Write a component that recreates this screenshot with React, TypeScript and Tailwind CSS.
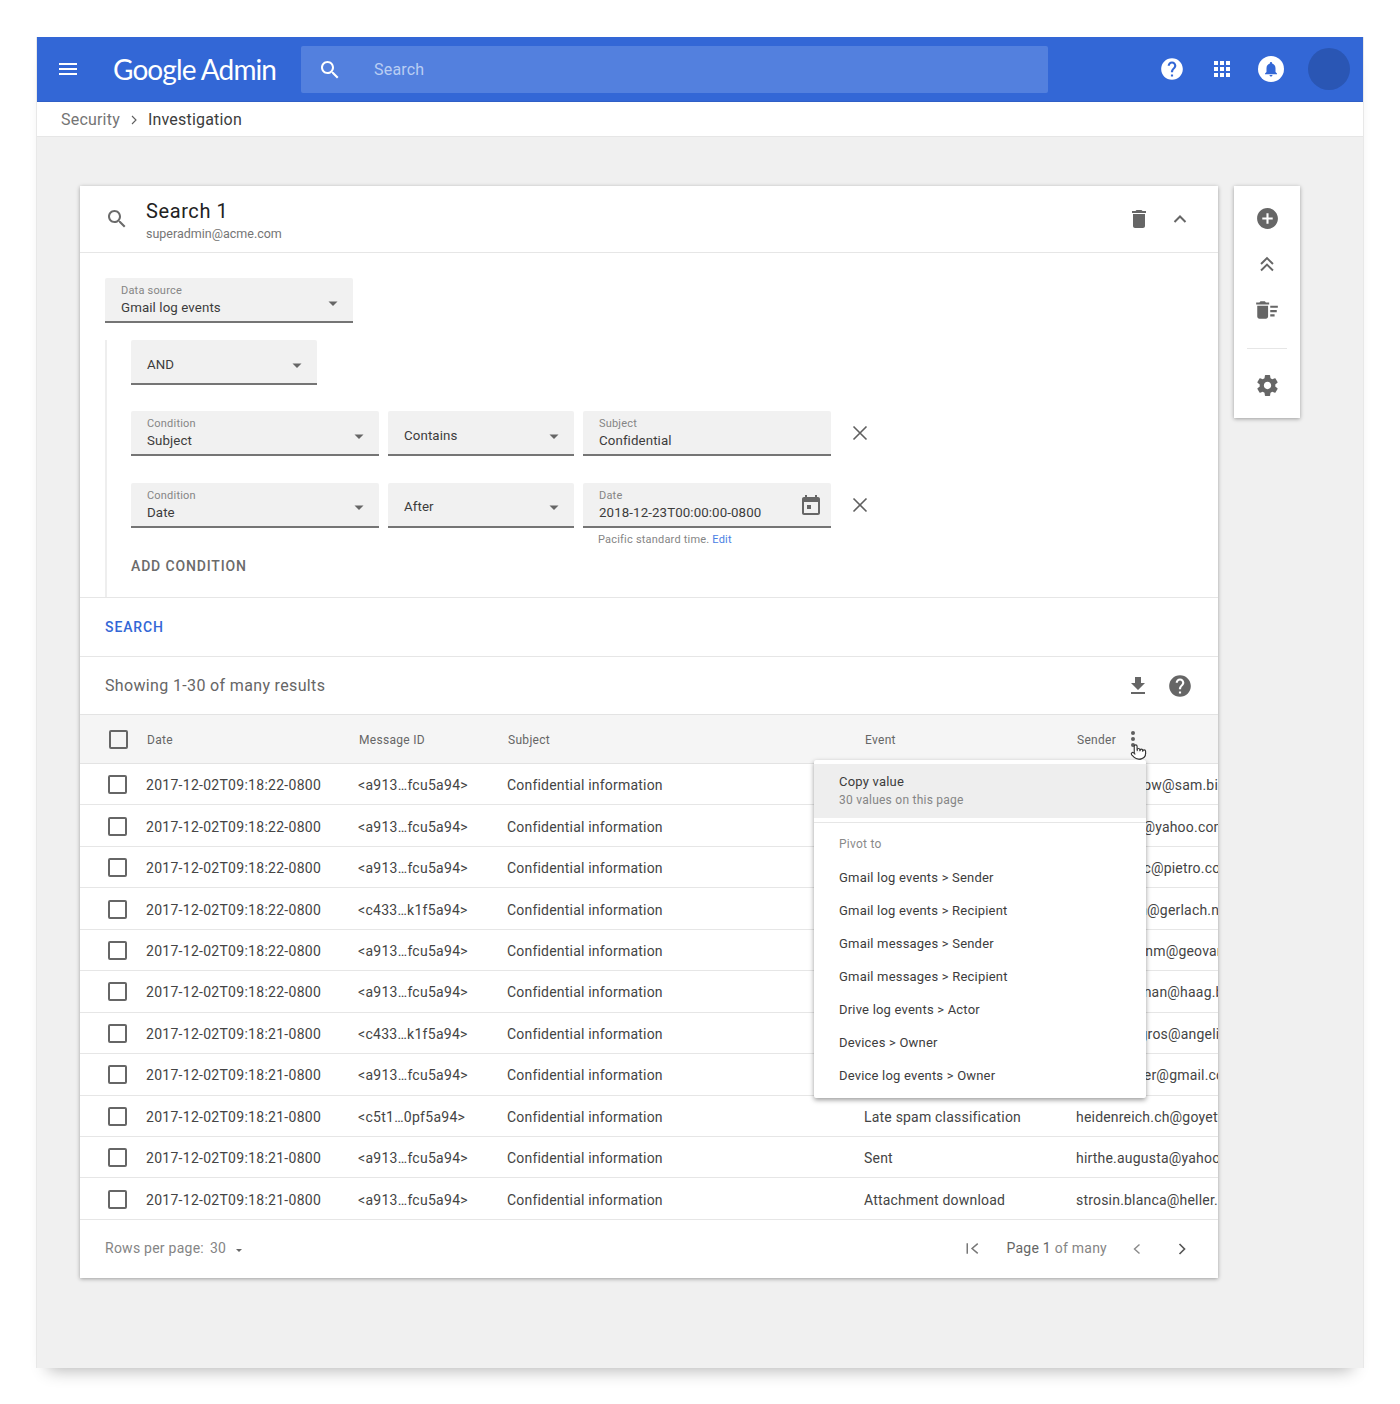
import type { ReactNode } from "react";
import { Pointer } from "lucide-react";

const paths = {
  menu: "M3 18h18v-2H3v2zm0-5h18v-2H3v2zm0-7v2h18V6H3z",
  search:
    "M15.5 14h-.79l-.28-.27C15.41 12.59 16 11.11 16 9.5 16 5.91 13.09 3 9.5 3S3 5.91 3 9.5 5.91 16 9.5 16c1.61 0 3.09-.59 4.23-1.57l.27.28v.79l5 4.99L20.49 19l-4.99-5zm-6 0C7.01 14 5 11.99 5 9.5S7.01 5 9.5 5 14 7.01 14 9.5 11.99 14 9.5 14z",
  help: "M12 2C6.48 2 2 6.48 2 12s4.48 10 10 10 10-4.48 10-10S17.52 2 12 2zm1 17h-2v-2h2v2zm2.07-7.75l-.9.92C13.45 12.9 13 13.5 13 15h-2v-.5c0-1.1.45-2.1 1.17-2.83l1.24-1.26c.37-.36.59-.86.59-1.41 0-1.1-.9-2-2-2s-2 .9-2 2H8c0-2.21 1.79-4 4-4s4 1.79 4 4c0 .88-.36 1.68-.93 2.25z",
  apps: "M4 8h4V4H4v4zm6 12h4v-4h-4v4zm-6 0h4v-4H4v4zm0-6h4v-4H4v4zm6 0h4v-4h-4v4zm6-10v4h4V4h-4zm-6 4h4V4h-4v4zm6 6h4v-4h-4v4zm0 6h4v-4h-4v4z",
  bell: "M12 22c1.1 0 2-.9 2-2h-4c0 1.1.9 2 2 2zm6-6v-5c0-3.07-1.63-5.64-4.5-6.32V4c0-.83-.67-1.5-1.5-1.5s-1.5.67-1.5 1.5v.68C7.64 5.36 6 7.92 6 11v5l-2 2v1h16v-1l-2-2z",
  trash: "M6 19c0 1.1.9 2 2 2h8c1.1 0 2-.9 2-2V7H6v12zM19 4h-3.5l-1-1h-5l-1 1H5v2h14V4z",
  add: "M12 2C6.48 2 2 6.48 2 12s4.48 10 10 10 10-4.48 10-10S17.52 2 12 2zm5 11h-4v4h-2v-4H7v-2h4V7h2v4h4v2z",
  sweep: "M15 16h4v2h-4zm0-8h7v2h-7zm0 4h6v2h-6zM3 18c0 1.1.9 2 2 2h6c1.1 0 2-.9 2-2V8H3v10zM14 5h-3l-1-1H6L5 5H2v2h12z",
  gear: "M19.43 12.98c.04-.32.07-.64.07-.98s-.03-.66-.07-.98l2.11-1.65c.19-.15.24-.42.12-.64l-2-3.46c-.12-.22-.39-.3-.61-.22l-2.49 1c-.52-.4-1.08-.73-1.69-.98l-.38-2.65C14.46 2.18 14.25 2 14 2h-4c-.25 0-.46.18-.49.42l-.38 2.65c-.61.25-1.17.59-1.69.98l-2.49-1c-.23-.09-.49 0-.61.22l-2 3.46c-.13.22-.07.49.12.64l2.11 1.65c-.04.32-.07.65-.07.98s.03.66.07.98l-2.11 1.65c-.19.15-.24.42-.12.64l2 3.46c.12.22.39.3.61.22l2.49-1c.52.4 1.08.73 1.69.98l.38 2.65c.03.24.24.42.49.42h4c.25 0 .46-.18.49-.42l.38-2.65c.61-.25 1.17-.59 1.69-.98l2.49 1c.23.09.49 0 .61-.22l2-3.46c.12-.22.07-.49-.12-.64l-2.11-1.65zM12 15.5c-1.93 0-3.5-1.57-3.5-3.5s1.57-3.5 3.5-3.5 3.5 1.57 3.5 3.5-1.57 3.5-3.5 3.5z",
  calendar: "M19 4h-1V2h-2v2H8V2H6v2H5c-1.11 0-1.99.9-1.99 2L3 20c0 1.1.89 2 2 2h14c1.1 0 2-.9 2-2V6c0-1.1-.9-2-2-2zm0 16H5V9h14v11zM8 12h4v4H8z",
  download: "M19 9h-4V3H9v6H5l7 7 7-7zM5 18v2h14v-2H5z",
  caret: "M7.5 10.5l4.5 4.5 4.5-4.5z",
};

function Icon({ d, className }: { d: string; className?: string }) {
  return (
    <svg viewBox="0 0 24 24" fill="currentColor" className={className} aria-hidden>
      <path d={d} />
    </svg>
  );
}

function Line({ d, className, width = 2 }: { d: string; className?: string; width?: number }) {
  return (
    <svg viewBox="0 0 24 24" fill="none" stroke="currentColor" strokeWidth={width} className={className} aria-hidden>
      <path d={d} />
    </svg>
  );
}

function Checkbox() {
  return <div className="w-[19px] h-[19px] border-2 border-[#666] rounded-[2px]" />;
}

function Field({
  label,
  value,
  width,
  dropdown = true,
  right,
}: {
  label?: string;
  value: string;
  width: string;
  dropdown?: boolean;
  right?: ReactNode;
}) {
  return (
    <div className={`${width} h-[45px] shrink-0 flex items-center justify-between bg-[#f1f1f1] border-b-2 border-[#757575] rounded-t-[2px] pl-[16px] pr-[8px]`}>
      <div className={label ? "flex flex-col pt-[2px]" : "flex flex-col pt-[5px]"}>
        {label && <span className="mb-px text-[11px] leading-[13px] tracking-[0.2px] text-[#858585]">{label}</span>}
        <span className="text-[13.3px] leading-[19px] tracking-[0.1px] text-[#3c3c3c]">{value}</span>
      </div>
      {dropdown && <Icon d={paths.caret} className="w-[24px] h-[24px] mt-[6px] text-[#666]" />}
      {right}
    </div>
  );
}

function RemoveButton({ className }: { className?: string }) {
  return (
    <Line
      d="M5.5 5.5l13 13M18.5 5.5l-13 13"
      width={1.6}
      className={`w-[24px] h-[24px] ml-[8px] text-[#5f5f5f] ${className ?? ""}`}
    />
  );
}

const rows = [
  ["<a913…fcu5a94>", "", "schroeder.pw@sam.biz"],
  ["<a913…fcu5a94>", "", "marvin.lila@yahoo.com"],
  ["<a913…fcu5a94>", "", "kuhlman.ric@pietro.com"],
  ["<c433…k1f5a94>", "", "hoppe.leon@gerlach.net"],
  ["<a913…fcu5a94>", "", "wintheiser.nm@geovanni.org"],
  ["<a913…fcu5a94>", "", "dariana.hanan@haag.biz"],
  ["<c433…k1f5a94>", "", "hildegard.gros@angelita.com"],
  ["<a913…fcu5a94>", "", "tad.schaefer@gmail.com"],
  ["<c5t1…0pf5a94>", "Late spam classification", "heidenreich.ch@goyette.com"],
  ["<a913…fcu5a94>", "Sent", "hirthe.augusta@yahoo.com"],
  ["<a913…fcu5a94>", "Attachment download", "strosin.blanca@heller.biz"],
];

const dates = [22, 22, 22, 22, 22, 22, 21, 21, 21, 21, 21];

const pivots = [
  "Gmail log events > Sender",
  "Gmail log events > Recipient",
  "Gmail messages > Sender",
  "Gmail messages > Recipient",
  "Drive log events > Actor",
  "Devices > Owner",
  "Device log events > Owner",
];

function ColumnMenu() {
  return (
    <div className="absolute left-[734px] top-[46px] w-[332px] h-[338px] bg-white rounded-[2px] pt-[4px] shadow-[0_2px_5px_rgba(0,0,0,0.4)] z-10">
      <div className="h-[54px] bg-[#eeeeee] pl-[25px] flex flex-col justify-center">
        <span className="text-[13px] leading-[18px] tracking-[0.2px] text-[#3c3c3c]">Copy value</span>
        <span className="text-[12px] leading-[18px] tracking-[0.25px] text-[#858585]">30 values on this page</span>
      </div>
      <div className="mt-[4px] border-t border-[#e6e6e6] pl-[25px]">
        <div className="h-[38px] pt-[3px] flex items-center text-[12px] tracking-[0.25px] text-[#8a8a8a]">Pivot to</div>
        {pivots.map((p) => (
          <div key={p} className="h-[33px] flex items-center text-[13px] tracking-[0.2px] text-[#3c3c3c]">
            {p}
          </div>
        ))}
      </div>
    </div>
  );
}

function ResultsTable() {
  return (
    <div className="relative">
      <div className="h-[50px] flex items-center bg-[#f5f5f5] border-y border-[#e3e3e3] text-[12px] tracking-[0.3px] text-[#666]">
        <div className="w-[66px] pl-[29px] shrink-0">
          <Checkbox />
        </div>
        <div className="w-[212px] pl-px pt-px shrink-0">Date</div>
        <div className="w-[149px] pl-px pt-px shrink-0">Message ID</div>
        <div className="w-[357px] pl-px pt-px shrink-0">Subject</div>
        <div className="w-[212px] pl-px pt-px shrink-0">Event</div>
        <div className="pl-px pt-px">Sender</div>
        <div className="ml-[15px] flex flex-col gap-[2.5px]">
          <span className="w-[3.5px] h-[3.5px] rounded-full bg-[#5f5f5f]" />
          <span className="w-[3.5px] h-[3.5px] rounded-full bg-[#5f5f5f]" />
          <span className="w-[3.5px] h-[3.5px] rounded-full bg-[#5f5f5f]" />
        </div>
      </div>
      {rows.map((r, i) => (
        <div
          key={i}
          className="h-[41.45px] pt-[3px] flex items-center border-b border-[#e6e6e6] text-[14px] tracking-[0.2px] text-[#444] whitespace-nowrap overflow-hidden"
        >
          <div className="w-[66px] pl-[28px] -mt-[2px] shrink-0">
            <Checkbox />
          </div>
          <div className="w-[212px] shrink-0 tracking-[0.28px]">2017-12-02T09:18:{dates[i]}-0800</div>
          <div className="w-[149px] shrink-0 tracking-[0.28px]">{r[0]}</div>
          <div className="w-[357px] shrink-0">Confidential information</div>
          <div className="w-[212px] shrink-0">{r[1]}</div>
          <div>{r[2]}</div>
        </div>
      ))}
      <ColumnMenu />
      <Pointer
        className="absolute left-[1050px] top-[28px] w-[17px] h-[20px] z-20 text-[#333]"
        fill="white"
        strokeWidth={1.6}
      />
    </div>
  );
}

function RailButton({ children, className }: { children: ReactNode; className?: string }) {
  return <div className={`h-[46px] flex items-center justify-center text-[#666] ${className ?? ""}`}>{children}</div>;
}

export default function App() {
  return (
    <div className="min-h-[1404px] bg-white pt-[37px] px-[36px] font-['Roboto',sans-serif]">
      <div className="w-[1328px] h-[1331px] bg-[#f0f0f0] border-x border-[#e8e8e8] shadow-[0_14px_16px_-12px_rgba(0,0,0,0.3)]">
        <header className="h-[65px] bg-[#3367d6] flex items-center text-white border-b border-[#2f5fc6]">
          <Icon d={paths.menu} className="w-[24px] h-[24px] ml-[19px] shrink-0" />
          <span className="ml-[33px] w-[188px] shrink-0 font-['Lato',sans-serif] text-[28px] leading-none tracking-[-0.9px]">
            Google Admin
          </span>
          <div className="w-[747px] h-[47px] mt-px shrink-0 bg-[#5380de] rounded-[2px] flex items-center">
            <Icon d={paths.search} className="w-[24px] h-[24px] ml-[17px]" />
            <span className="ml-[32px] text-[16px] tracking-[0.2px] text-[#b9cdf3]">Search</span>
          </div>
          <Icon d={paths.help} className="w-[26px] h-[26px] ml-[111px] shrink-0" />
          <Icon d={paths.apps} className="w-[24px] h-[24px] ml-[25px] shrink-0" />
          <div className="ml-[24px] w-[26px] h-[26px] rounded-full bg-white flex items-center justify-center shrink-0">
            <Icon d={paths.bell} className="w-[18px] h-[18px] text-[#3367d6]" />
          </div>
          <div className="ml-[24px] w-[42px] h-[42px] rounded-full bg-[#2a56b4] shrink-0" />
        </header>

        <nav className="h-[35px] pl-[24px] pt-px bg-white border-b border-[#e6e6e6] flex items-center text-[16px] tracking-[0.2px]">
          <span className="text-[#757575]">Security</span>
          <Line d="M9 6l6 6-6 6" width={1.7} className="w-[16px] h-[16px] mx-[6px] text-[#5f5f5f]" />
          <span className="text-[#3c3c3c]">Investigation</span>
        </nav>

        <main className="flex items-start pt-[49px] pl-[43px]">
          <section className="w-[1138px] h-[1092px] shrink-0 bg-white shadow-[0_1px_4px_rgba(0,0,0,0.35)]">
            <div className="h-[67px] flex items-center border-b border-[#e6e6e6] pl-[25px] pr-[26px]">
              <Icon d={paths.search} className="w-[24px] h-[24px] text-[#6b6b6b]" />
              <div className="ml-[17px] pt-[3px] flex flex-col">
                <span className="text-[20px] leading-[26px] tracking-[0.6px] text-[#222]">Search 1</span>
                <span className="text-[12.5px] leading-[20px] text-[#757575]">superadmin@acme.com</span>
              </div>
              <Icon d={paths.trash} className="w-[24px] h-[24px] ml-auto text-[#666]" />
              <Line d="M6.5 15l5.5-5.5 5.5 5.5" className="w-[24px] h-[24px] ml-[17px] text-[#666]" />
            </div>

            <div className="h-[345px] border-b border-[#e6e6e6] pt-[25px] pl-[25px]">
              <Field label="Data source" value="Gmail log events" width="w-[248px]" />
              <div className="mt-[17px] h-[257px] border-l-2 border-[#eeeeee] pl-[24px]">
                <Field value="AND" width="w-[186px]" />
                <div className="mt-[26px] flex items-center gap-[9px]">
                  <Field label="Condition" value="Subject" width="w-[248px]" />
                  <Field value="Contains" width="w-[186px]" />
                  <Field label="Subject" value="Confidential" width="w-[248px]" dropdown={false} />
                  <RemoveButton className="-mt-[2px]" />
                </div>
                <div className="mt-[26.5px] flex items-center gap-[9px]">
                  <Field label="Condition" value="Date" width="w-[248px]" />
                  <Field value="After" width="w-[186px]" />
                  <Field
                    label="Date"
                    value="2018-12-23T00:00:00-0800"
                    width="w-[248px]"
                    dropdown={false}
                    right={<Icon d={paths.calendar} className="w-[24px] h-[24px] mt-[2px] text-[#666] shrink-0" />}
                  />
                  <RemoveButton />
                </div>
                <p className="mt-[5px] ml-[467px] text-[11px] leading-[14px] tracking-[0.2px] text-[#858585]">
                  Pacific standard time. <span className="text-[#4a80e4]">Edit</span>
                </p>
                <p className="mt-[9px] text-[14px] font-medium leading-[20px] tracking-[0.85px] text-[#6b6b6b]">ADD CONDITION</p>
              </div>
            </div>

            <div className="h-[59px] flex items-center pl-[25px] border-b border-[#e6e6e6] text-[14px] font-medium tracking-[0.9px] text-[#3367d6]">
              SEARCH
            </div>

            <div className="h-[57px] flex items-center pl-[25px] pr-[25px] text-[16px] tracking-[0.35px] text-[#666]">
              Showing 1-30 of many results
              <Icon d={paths.download} className="w-[24px] h-[24px] ml-auto text-[#666]" />
              <Icon d={paths.help} className="w-[26px] h-[26px] ml-[17px] text-[#666]" />
            </div>

            <ResultsTable />

            <div className="h-[58px] flex items-center pl-[25px] pr-[26px] text-[14px] tracking-[0.25px] text-[#858585]">
              <span className="pb-px">Rows per page:</span>
              <span className="ml-[6px] pb-px">30</span>
              <Icon d={paths.caret} className="w-[16px] h-[16px] ml-[5px] mt-[2px] text-[#666]" />
              <Line d="M6 6v12M18 6.5l-6.5 5.5 6.5 5.5" width={1.7} className="w-[21px] h-[21px] ml-auto text-[#777]" />
              <span className="ml-[23px] pb-px">
                <span className="text-[#666]">Page 1</span> of many
              </span>
              <Line d="M15 6.5l-6 5.5 6 5.5" width={1.7} className="w-[20px] h-[20px] ml-[20px] text-[#8a8a8a]" />
              <Line d="M9 6l6 6-6 6" width={2} className="w-[20px] h-[20px] ml-[25px] text-[#555]" />
            </div>
          </section>

          <aside className="w-[66px] h-[232px] ml-[16px] shrink-0 bg-white shadow-[0_1px_4px_rgba(0,0,0,0.35)] pt-[9px]">
            <RailButton>
              <Icon d={paths.add} className="w-[25px] h-[25px]" />
            </RailButton>
            <RailButton>
              <Line d="M6.5 12l5.5-5.5 5.5 5.5M6.5 18l5.5-5.5 5.5 5.5" width={1.8} className="w-[26px] h-[26px]" />
            </RailButton>
            <RailButton>
              <Icon d={paths.sweep} className="w-[26px] h-[26px]" />
            </RailButton>
            <div className="mx-[13px] mt-[15px] border-t border-[#e6e6e6]" />
            <RailButton className="mt-[13px]">
              <Icon d={paths.gear} className="w-[25px] h-[25px]" />
            </RailButton>
          </aside>
        </main>
      </div>
    </div>
  );
}
